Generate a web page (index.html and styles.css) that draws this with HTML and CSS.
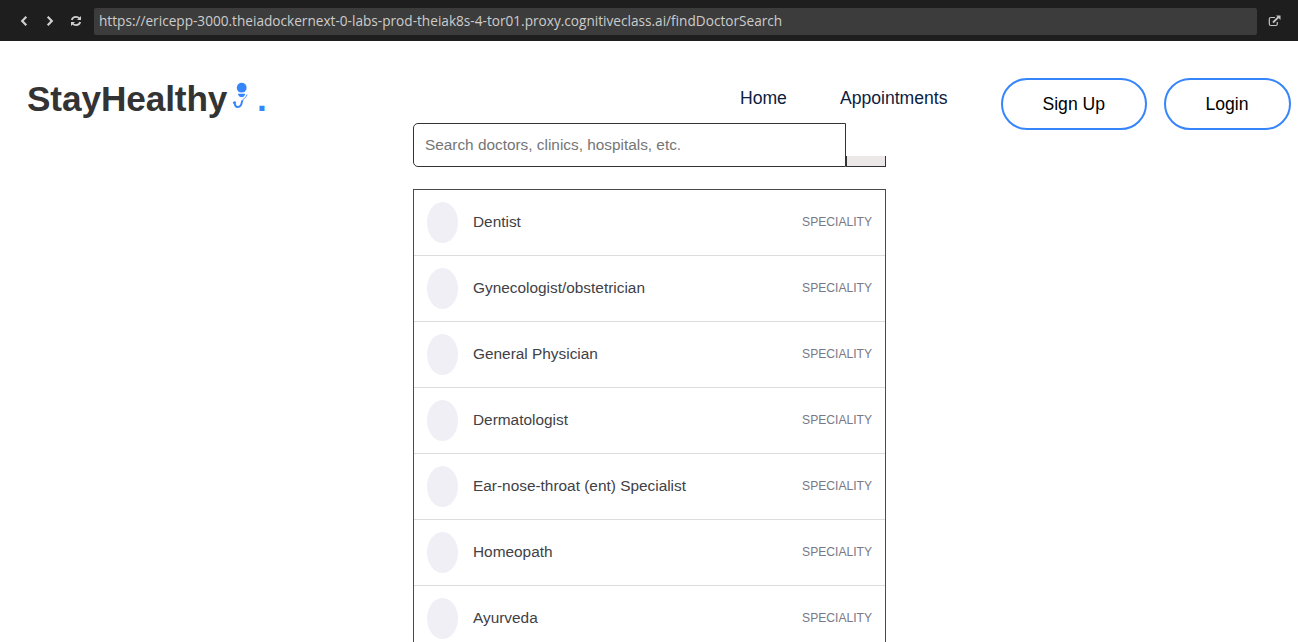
FILE: index.html
```
<!DOCTYPE html>
<html lang="en">
<head>
<meta charset="utf-8">
<title>StayHealthy</title>
<link rel="stylesheet" href="styles.css">
</head>
<body>
<div class="toolbar">
  <svg class="tool back" width="12" height="14" viewBox="0 0 12 14"><path d="M8.300 2.800 4.200 7l4.100 4.200" fill="none" stroke="#d0d0d0" stroke-width="2.200"/></svg>
  <svg class="tool forward" width="12" height="14" viewBox="0 0 12 14"><path d="M3.700 2.800 7.800 7l-4.100 4.200" fill="none" stroke="#d0d0d0" stroke-width="2.200"/></svg>
  <svg class="tool reload" width="12" height="12" viewBox="0 0 12 12"><path d="M1.800 5C2.300 3 4 1.900 6 1.900c1.500 0 2.600.6 3.500 1.500M10.200 7C9.700 9 8 10.100 6 10.100c-1.500 0-2.600-.6-3.500-1.500" fill="none" stroke="#d0d0d0" stroke-width="1.700"/><path d="M11 1v4H7zM1 11V7h4z" fill="#d0d0d0"/></svg>
  <div class="address"><span class="url">https://ericepp-3000.theiadockernext-0-labs-prod-theiak8s-4-tor01.proxy.cognitiveclass.ai/findDoctorSearch</span></div>
  <svg class="tool external" width="13" height="12" viewBox="0 0 13 12"><path d="M7 2.500H2.800Q1.300 2.500 1.300 4v5q0 1.500 1.500 1.500h5q1.500 0 1.500-1.500V7" fill="none" stroke="#c4c4c4" stroke-width="1.200"/><path d="M5 7.500 10.500 2" stroke="#c4c4c4" stroke-width="1.800"/><path d="M8 .5h4.500V5z" fill="#c4c4c4"/></svg>
</div>
<header class="header">
  <div class="logo"><span class="brand">StayHealthy</span><svg class="mark" width="16" height="28" viewBox="0 0 16 28"><g fill="#3685fb"><circle cx="9.700" cy="5.700" r="4.900"/><path d="M5.800 11.700h7.600c-.8 2.500-2.200 3.400-3.800 3.400s-3.100-.9-3.800-3.400z"/></g><path d="M15 12.500q-.2 2.200-2.500 3.500-1.900 1.200-2.100 4" fill="none" stroke="#3685fb" stroke-width=".9"/><path d="M1.100 21.200l2.600-1.400M2.800 20.500c-.1 3 1 4.500 3 4.500 2.700 0 3.900-2 4.300-6.500" fill="none" stroke="#3685fb" stroke-width="2"/></svg><span class="dot">.</span></div>
  <nav class="nav">
    <a class="link home">Home</a>
    <a class="link appointments">Appointments</a>
    <button class="pill signup">Sign Up</button>
    <button class="pill login">Login</button>
  </nav>
</header>
<main class="finder">
  <div class="search"><input class="search-input" placeholder="Search doctors, clinics, hospitals, etc."><div class="search-icon"></div></div>
  <div class="results">
    <div class="result"><span class="avatar"></span><span class="name">Dentist</span><span class="kind">SPECIALITY</span></div>
    <div class="result"><span class="avatar"></span><span class="name">Gynecologist/obstetrician</span><span class="kind">SPECIALITY</span></div>
    <div class="result"><span class="avatar"></span><span class="name">General Physician</span><span class="kind">SPECIALITY</span></div>
    <div class="result"><span class="avatar"></span><span class="name">Dermatologist</span><span class="kind">SPECIALITY</span></div>
    <div class="result"><span class="avatar"></span><span class="name">Ear-nose-throat (ent) Specialist</span><span class="kind">SPECIALITY</span></div>
    <div class="result"><span class="avatar"></span><span class="name">Homeopath</span><span class="kind">SPECIALITY</span></div>
    <div class="result"><span class="avatar"></span><span class="name">Ayurveda</span><span class="kind">SPECIALITY</span></div>
  </div>
</main>
</body>
</html>
```
FILE: styles.css
```
* { box-sizing: border-box; }
body {
  margin: 0;
  height: 642px;
  overflow: hidden;
  background: #fff;
  font-family: "Liberation Sans", Arial, sans-serif;
}
.toolbar {
  display: flex;
  align-items: center;
  height: 41px;
  padding-left: 18px;
  background: #1e1e1e;
}
.tool { flex: none; }
.forward { margin-left: 14px; }
.reload { margin-left: 14px; margin-right: 12px; width: 12px; }
.address {
  display: flex;
  align-items: center;
  width: 1163px;
  height: 27px;
  margin-top: 2px;
  padding: 0 0 2px 5px;
  border-radius: 2px;
  background: #3c3c3c;
}
.url {
  color: #ccc;
  font: 13.630px/18px "Open Sans", sans-serif;
  white-space: nowrap;
}
.external { margin-left: 11px; }
.header {
  display: flex;
  justify-content: space-between;
  align-items: flex-start;
  height: 82px;
  padding: 37px 7.500px 0 27px;
}
.logo {
  display: flex;
  align-items: flex-start;
  color: #333;
  font-size: 35.200px;
  font-weight: bold;
  line-height: 42px;
}
.brand { width: 200px; letter-spacing: -0.1px; }
.mark { margin: 4px 0 0 5px; }
.dot { margin-left: 9px; color: #3685fb; }
.nav { display: flex; align-items: flex-start; }
.link {
  color: #0c213f;
  font-size: 17.600px;
  line-height: 21px;
  margin-top: 10px;
}
.appointments { margin-left: 53px; margin-right: 53px; }
.pill {
  height: 52px;
  padding: 0;
  border: 2px solid #3685fb;
  border-radius: 26px;
  background: #fff;
  color: #000;
  font: 17.600px "Liberation Sans", Arial, sans-serif;
}
.signup { width: 146.500px; }
.login { width: 127px; margin-left: 16.500px; }
.finder { width: 473px; margin-left: 413px; }
.search { display: flex; align-items: flex-end; height: 44px; }
.search-input {
  width: 433px;
  height: 44px;
  padding: 0 11px 1px;
  border: 1px solid #333;
  border-radius: 5px 0 0 5px;
  background: #fff;
  font: 15.360px "Liberation Sans", Arial, sans-serif;
  outline: 0;
}
.search-input::placeholder { color: #757575; }
.search-icon {
  width: 40px;
  height: 11px;
  border: solid #333;
  border-width: 0 1px 1px;
  background: #ede8e8;
}
.results { margin-top: 22px; border: 1px solid #4c4c4c; }
.result {
  display: flex;
  align-items: center;
  height: 66px;
  padding: 0 13px;
  border-bottom: 1px solid #dcdcdc;
}
.avatar {
  width: 31px;
  height: 41px;
  border-radius: 50%;
  background: #f0eff5;
}
.name {
  margin-left: 15px;
  padding-bottom: 2px;
  color: #414146;
  font-size: 15.400px;
}
.kind {
  margin-left: auto;
  padding-bottom: 2px;
  color: #787887;
  font-size: 12.100px;
}
```
